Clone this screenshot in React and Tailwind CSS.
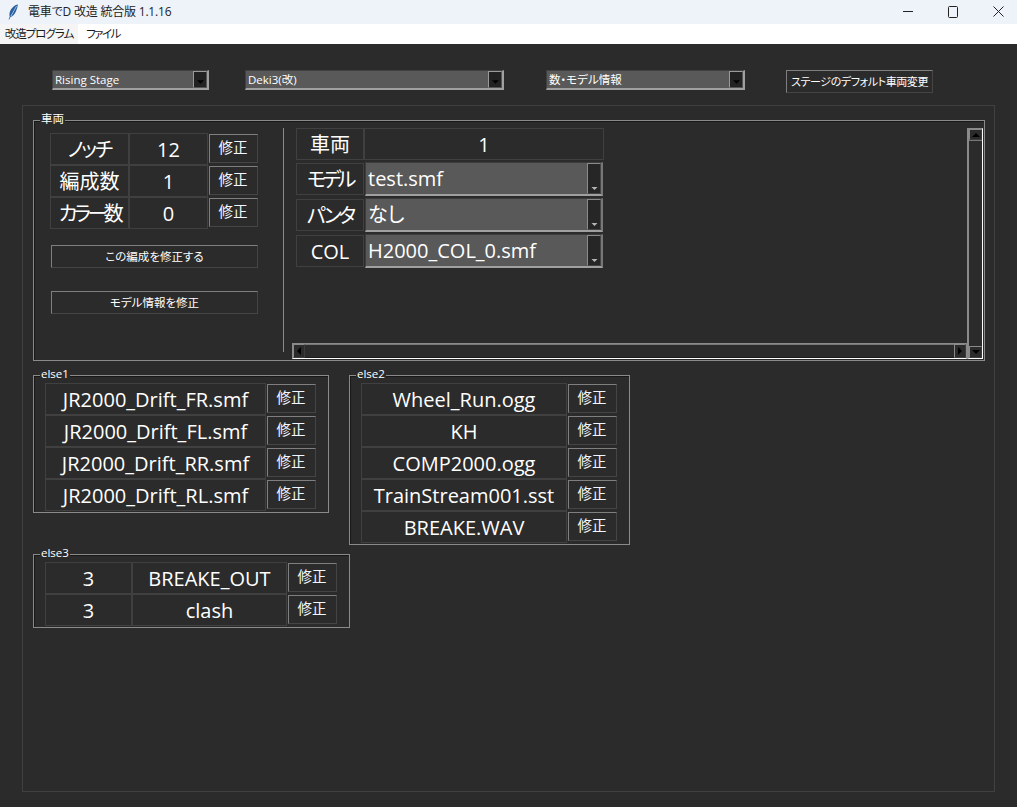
import React from 'react';

const uiFont = '[font-family:"Open_Sans","Noto_Sans_CJK_JP",sans-serif] [font-feature-settings:"palt"]';

const Arrow = ({ dir = 'down', className = '' }) => {
  const points = {
    down: '0,0 8,0 4,4',
    up: '0,4 8,4 4,0',
    left: '4,0 4,8 0,4',
    right: '0,0 0,8 4,4',
  };
  const box = dir === 'left' || dir === 'right' ? '0 0 4 8' : '0 0 8 4';
  return (
    <svg viewBox={box} className={className} fill="currentColor">
      <polygon points={points[dir]} />
    </svg>
  );
};

const Cell = ({ className = '', children }) => (
  <div className={`flex h-[32px] items-center justify-center whitespace-nowrap border border-[#404040] pt-px text-[20px] leading-none text-white ${className}`}>
    {children}
  </div>
);

const FixButton = () => (
  <button className="ml-px mt-px h-[29px] w-[49px] border border-[#7f7f7f] border-b-[#454545] border-r-[#454545] pb-px pr-px text-[14.5px] leading-none text-[#f2f7ff]">
    修正
  </button>
);

const Row = ({ cells }) => (
  <div className="flex">
    {cells.map(([text, width], i) => (
      <Cell key={i} className={width}>{text}</Cell>
    ))}
    <FixButton />
  </div>
);

const Frame = ({ title, className = '', children }) => (
  <div className={`relative border border-[#8a8a8a] shadow-[inset_1px_1px_0_#181818] ${className}`}>
    <span className="absolute -top-[10px] left-[6px] bg-[#2b2b2b] px-px text-[11.5px] leading-[16px] text-white">{title}</span>
    {children}
  </div>
);

const TopCombo = ({ text, width }) => (
  <div className={`flex h-[20px] items-center justify-between border border-[#404040] border-b-2 border-r-2 border-b-[#a0a0a0] border-r-[#a0a0a0] bg-[#595959] pl-[2px] ${width}`}>
    <span className="whitespace-nowrap text-[11.5px] leading-none text-white">{text}</span>
    <span className="flex h-full w-[14px] items-end justify-center border border-[#9a9a9a] border-b-[#555] border-r-[#555] bg-[#222] pb-[3px] text-black">
      <Arrow className="h-[4px] w-[7px]" />
    </span>
  </div>
);

const CellCombo = ({ text }) => (
  <div className="flex h-[34px] w-[238px] items-center justify-between border border-[#3d3d3d] border-b-2 border-r-2 border-b-[#a0a0a0] border-r-[#777] bg-[#595959] pl-px">
    <span className="pl-px text-[20px] leading-none text-white">{text}</span>
    <span className="flex h-full w-[14px] items-end justify-center border border-[#8a8a8a] border-b-[#444] border-r-[#444] bg-[#262626] pb-[3px] text-[#b5b5b5]">
      <Arrow className="h-[3px] w-[7px]" />
    </span>
  </div>
);

const ScrollBtn = ({ dir, className = '' }) => (
  <div className={`flex shrink-0 items-center justify-center border border-[#8a8a8a] border-b-[#3c3c3c] border-r-[#3c3c3c] text-black ${className}`}>
    <Arrow dir={dir} className={dir === 'left' || dir === 'right' ? 'h-[8px] w-[4px]' : 'h-[4px] w-[8px]'} />
  </div>
);

const else1 = ['JR2000_Drift_FR.smf', 'JR2000_Drift_FL.smf', 'JR2000_Drift_RR.smf', 'JR2000_Drift_RL.smf'];
const else2 = ['Wheel_Run.ogg', 'KH', 'COMP2000.ogg', 'TrainStream001.sst', 'BREAKE.WAV'];
const carRows = [
  ['モデル', 'tracking-[-3.5px]', 'test.smf'],
  ['パンタ', 'tracking-[-3px]', 'なし'],
  ['COL', '', 'H2000_COL_0.smf'],
];

export default function App() {
  return (
    <div className={`flex h-[807px] w-[1017px] flex-col overflow-hidden bg-[#2b2b2b] ${uiFont}`}>
      {/* window title */}
      <div className="flex h-[24px] shrink-0 items-center bg-[#eef2f9]">
        <svg viewBox="0 0 12 16" className="ml-[7px] h-[16px] w-[12px]">
          <path d="M10.8 0.6C7.5 1.2 4.3 4.2 3 7.6 2.2 9.8 2.3 11.6 2.8 12.6L1.6 15.4 2.3 15.6 3.5 12.9C5.8 12.6 7.8 10 9 7.2 10 4.8 10.8 2.4 10.8 0.6Z" fill="#2a5f9e" />
          <path d="M9.6 2 4 12" stroke="#cfe3f7" strokeWidth="0.7" />
        </svg>
        <span className="ml-[9px] whitespace-nowrap text-[12px] leading-none tracking-[-0.2px] text-[#222]">電車でD 改造 統合版 1.1.16</span>
        <div className="ml-auto -mr-[4px] flex">
          <div className="flex w-[45px] justify-center">
            <svg viewBox="0 0 10 10" className="h-[10px] w-[10px]"><path d="M0 5.5H10" stroke="#222" /></svg>
          </div>
          <div className="flex w-[45px] justify-center">
            <svg viewBox="0 0 10 12" className="h-[12px] w-[10px]"><rect x="0.5" y="0.5" width="9" height="11" rx="1" fill="none" stroke="#222" /></svg>
          </div>
          <div className="flex w-[46px] justify-center">
            <svg viewBox="0 0 11 11" className="h-[11px] w-[11px]"><path d="M0.5 0.5L10.5 10.5M10.5 0.5L0.5 10.5" stroke="#222" /></svg>
          </div>
        </div>
      </div>

      {/* menu bar */}
      <div className="flex h-[20px] shrink-0 items-center whitespace-nowrap bg-white text-[11.5px] leading-none text-[#1a1a1a]">
        <span className="flex h-full w-[78px] items-center justify-center bg-[#f5f5f5] tracking-[-1px]">改造プログラム</span>
        <span className="ml-[8px] tracking-[-1.5px]">ファイル</span>
      </div>

      <div className="flex flex-1 flex-col px-[22px] pb-[15px] pt-[26px]">
        {/* stage / vehicle selectors */}
        <div className="mb-[12px] flex h-[23px] items-start pl-[30px]">
          <TopCombo text="Rising Stage" width="w-[157px]" />
          <div className="w-[36px]" />
          <TopCombo text="Deki3(改)" width="w-[259px]" />
          <div className="w-[42px]" />
          <TopCombo text="数・モデル情報" width="w-[199px]" />
          <button className="ml-[41px] h-[23px] w-[147px] whitespace-nowrap border border-[#7f7f7f] border-b-[#454545] border-r-[#454545] text-[11px] leading-none tracking-[-0.4px] text-white">
            ステージのデフォルト車両変更
          </button>
        </div>

        <div className="flex-1 border border-[#404040] pl-[10px] pr-[9px] pt-[14px]">
          {/* 車両 */}
          <Frame title="車両" className="h-[241px] w-[952px] pt-[7px]">
            <div className="flex h-full">
              <div className="h-[224px] w-[250px] shrink-0 border-r border-[#8a8a8a] pl-[16px] pt-[5px]">
                <Row cells={[[<span className="tracking-[-2px]">ノッチ</span>, 'w-[79px]'], ['12', 'w-[79px]']]} />
                <Row cells={[['編成数', 'w-[79px]'], ['1', 'w-[79px]']]} />
                <Row cells={[[<span className="tracking-[-3.5px]">カラー数</span>, 'w-[79px]'], ['0', 'w-[79px]']]} />
                <button className="ml-px mt-[16px] block h-[23px] w-[207px] border border-[#7f7f7f] border-b-[#454545] border-r-[#454545] pt-px text-[11.5px] leading-none text-white">
                  この編成を修正する
                </button>
                <button className="ml-px mt-[23px] block h-[23px] w-[207px] border border-[#7f7f7f] border-b-[#454545] border-r-[#454545] pt-px text-[11.5px] leading-none text-white">
                  モデル情報を修正
                </button>
              </div>

              <div className="flex h-[231px] flex-1">
                <div className="flex w-[683px] flex-col">
                  <div className="h-[215px] pl-[12px]">
                    <div className="flex">
                      <Cell className="w-[68px]">車両</Cell>
                      <Cell className="w-[240px]">1</Cell>
                    </div>
                    {carRows.map(([label, tracking, value]) => (
                      <div key={label} className="mt-[2px] flex h-[34px] items-start">
                        <Cell className="mt-px w-[68px]"><span className={tracking}>{label}</span></Cell>
                        <div className="ml-px"><CellCombo text={value} /></div>
                      </div>
                    ))}
                  </div>
                  {/* horizontal scrollbar */}
                  <div className="ml-[8px] flex h-[16px] border border-[#8a8a8a] border-b-white">
                    <ScrollBtn dir="left" className="w-[12px]" />
                    <div className="flex-1 border-t border-[#777] border-b border-b-[#1c1c1c]" />
                    <ScrollBtn dir="right" className="w-[12px]" />
                  </div>
                </div>
                <div className="flex h-[231px] w-[16px] flex-col border-l-2 border-r border-t border-b border-[#8a8a8a] border-b-white border-r-white">
                  <ScrollBtn dir="up" className="h-[11px]" />
                  <div className="flex-1 border-t border-[#777]" />
                  <ScrollBtn dir="down" className="h-[12px]" />
                </div>
              </div>
            </div>
          </Frame>

          <div className="mt-[14px] flex h-[170px] items-start gap-[20px]">
            <Frame title="else1" className="h-[138px] w-[296px] pl-[11px] pt-[7px]">
              {else1.map((name) => (
                <Row key={name} cells={[[name, 'w-[221px]']]} />
              ))}
            </Frame>
            <Frame title="else2" className="h-[170px] w-[281px] pl-[11px] pt-[7px]">
              {else2.map((name) => (
                <Row key={name} cells={[[name, 'w-[206px]']]} />
              ))}
            </Frame>
          </div>

          <Frame title="else3" className="mt-[9px] h-[74px] w-[317px] pl-[11px] pt-[7px]">
            <Row cells={[['3', 'w-[87px]'], ['BREAKE_OUT', 'w-[155px]']]} />
            <Row cells={[['3', 'w-[87px]'], ['clash', 'w-[155px]']]} />
          </Frame>
        </div>
      </div>
    </div>
  );
}
